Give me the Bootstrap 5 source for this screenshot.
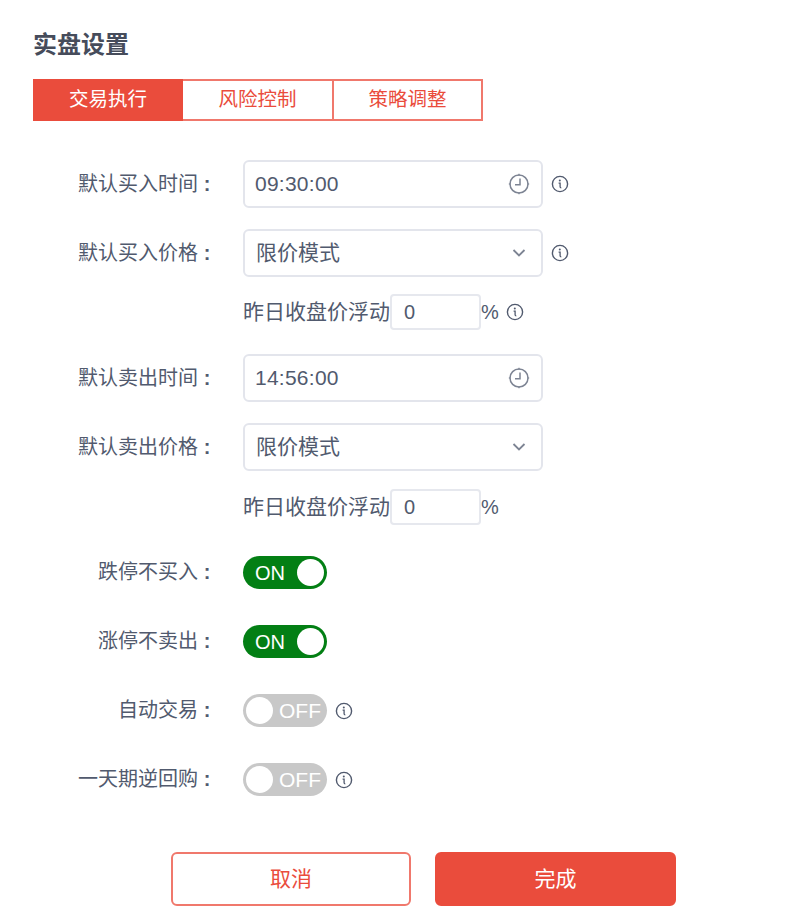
<!DOCTYPE html>
<html lang="zh-CN">
<head>
  <meta charset="UTF-8" />
  <title>实盘设置</title>
  <link rel="stylesheet" href="https://cdn.jsdelivr.net/npm/bootstrap@5.3.3/dist/css/bootstrap.min.css" />
  <style>
    body { font-family: "Liberation Sans", "Noto Sans CJK SC", sans-serif; font-size: 20px; color: #515a6e; background: #fff; }
    .page-wrap { width: 792px; height: 922px; padding: 30px 0 0 33px; overflow: hidden; }
    .page-title { font-size: 24px; line-height: 30px; font-weight: 700; color: #464c5b; margin: 0 0 19px; }
    .tab-bar { width: 450px; height: 42px; border: 2px solid #f0786c; margin-bottom: 39px; }
    .tab-item { flex: none; width: 149px; color: #ea4c3c; background: #fff; font-size: 19.500px; }
    .tab-item + .tab-item + .tab-item { border-left: 2px solid #f0786c; }
    .tab-item.active-tab { width: 150px; background: #ea4c3c; color: #fff; margin: -2px 0 -2px -2px; }
    .form-line { height: 48px; margin-bottom: 21px; }
    .form-line.with-sub { margin-bottom: 17px; }
    .form-line.with-sub-wide { margin-bottom: 18px; }
    .sub-line { height: 36px; margin: 0 0 24px 210px; color: #515a6e; font-size: 21px; }
    .sub-line.sub-last { margin-bottom: 31px; }
    .toggle-line { height: 33px; margin-bottom: 36px; }
    .form-name { width: 183px; text-align: right; color: #515a6e; margin-right: 27px; white-space: nowrap; padding-bottom: 1px; }
    .colon-mark { display: inline-block; width: 18px; text-align: center; font-weight: 700; }
    .fake-input { width: 300px; height: 48px; border: 2px solid #e3e5ec; border-radius: 6px; padding: 0 11px; font-size: 21px; color: #515a6e; }
    .fake-input.pick { padding-left: 10px; letter-spacing: .25px; }
    .fake-input .arrow-icon { margin-right: 4px; }
    .small-input { width: 91px; height: 36px; border: 2px solid #e6e8ee; border-radius: 4px; padding: 0 12px; font-size: 20px; }
    .pct-mark { font-size: 20px; }
    .info-icon { width: 18px; height: 18px; flex: none; margin-left: 8px; }
    .sub-line .info-icon { margin-left: 7px; }
    .switch-pill { width: 84px; height: 33px; border-radius: 17px; color: #fff; font-size: 20px; padding: 0 3px; }
    .switch-pill.on { background: #037f14; justify-content: space-between; padding-left: 12px; }
    .switch-pill.off { background: #c8c8c8; gap: 6px; font-size: 21px; }
    .switch-knob { width: 27px; height: 27px; border-radius: 50%; background: #fff; flex: none; }
    .foot-bar { margin: 56px 0 0 138px; gap: 24px; }
    .foot-btn { width: 240px; height: 54px; border-radius: 6px; border: 2px solid #f0786c; font-size: 21px; padding: 0; }
    .foot-btn.plain { background: #fff; color: #ea4c3c; }
    .foot-btn.solid { background: #ea4c3c; border-color: #ea4c3c; color: #fff; width: 241px; }
  </style>
</head>
<body>
  <svg width="0" height="0" class="position-absolute">
    <symbol id="ic-info" viewBox="0 0 18 18"><circle cx="9" cy="9" r="7.6" fill="none" stroke="#515a6e" stroke-width="1.4"/><path d="M7.6 8.200h1.500v3.600c0 .8.500 1 1.200 1" fill="none" stroke="#515a6e" stroke-width="1.300"/><circle cx="8.800" cy="5.600" r="1" fill="#515a6e"/></symbol>
    <symbol id="ic-clock" viewBox="0 0 22 22"><circle cx="11" cy="11" r="9" fill="none" stroke="#7d8493" stroke-width="1.500"/><path d="M12 5.500v6.300H7" fill="none" stroke="#7d8493" stroke-width="1.500"/><path d="M11 .8v2M11 19.200v2M.8 11h2M19.200 11h2" stroke="#7d8493" stroke-width="1.200"/></symbol>
    <symbol id="ic-down" viewBox="0 0 14 10"><path d="M1.500 2l5.500 5.500L12.500 2" fill="none" stroke="#7d8493" stroke-width="1.800"/></symbol>
  </svg>

  <div class="page-wrap">
    <h1 class="page-title">实盘设置</h1>

    <div class="tab-bar d-flex">
      <div class="tab-item active-tab d-flex align-items-center justify-content-center">交易执行</div>
      <div class="tab-item d-flex align-items-center justify-content-center">风险控制</div>
      <div class="tab-item d-flex align-items-center justify-content-center">策略调整</div>
    </div>

    <div class="form-line d-flex align-items-center">
      <div class="form-name">默认买入时间<span class="colon-mark">:</span></div>
      <div class="fake-input pick d-flex align-items-center justify-content-between"><span>09:30:00</span><svg width="22" height="22"><use href="#ic-clock"/></svg></div>
      <svg class="info-icon"><use href="#ic-info"/></svg>
    </div>
    <div class="form-line with-sub d-flex align-items-center">
      <div class="form-name">默认买入价格<span class="colon-mark">:</span></div>
      <div class="fake-input d-flex align-items-center justify-content-between"><span>限价模式</span><svg class="arrow-icon" width="14" height="10"><use href="#ic-down"/></svg></div>
      <svg class="info-icon"><use href="#ic-info"/></svg>
    </div>
    <div class="sub-line d-flex align-items-center">
      <span>昨日收盘价浮动</span>
      <div class="small-input d-flex align-items-center">0</div>
      <span class="pct-mark">%</span>
      <svg class="info-icon"><use href="#ic-info"/></svg>
    </div>

    <div class="form-line d-flex align-items-center">
      <div class="form-name">默认卖出时间<span class="colon-mark">:</span></div>
      <div class="fake-input pick d-flex align-items-center justify-content-between"><span>14:56:00</span><svg width="22" height="22"><use href="#ic-clock"/></svg></div>
    </div>
    <div class="form-line with-sub-wide d-flex align-items-center">
      <div class="form-name">默认卖出价格<span class="colon-mark">:</span></div>
      <div class="fake-input d-flex align-items-center justify-content-between"><span>限价模式</span><svg class="arrow-icon" width="14" height="10"><use href="#ic-down"/></svg></div>
    </div>
    <div class="sub-line sub-last d-flex align-items-center">
      <span>昨日收盘价浮动</span>
      <div class="small-input d-flex align-items-center">0</div>
      <span class="pct-mark">%</span>
    </div>

    <div class="toggle-line d-flex align-items-center">
      <div class="form-name">跌停不买入<span class="colon-mark">:</span></div>
      <div class="switch-pill on d-flex align-items-center"><span>ON</span><div class="switch-knob"></div></div>
    </div>
    <div class="toggle-line d-flex align-items-center">
      <div class="form-name">涨停不卖出<span class="colon-mark">:</span></div>
      <div class="switch-pill on d-flex align-items-center"><span>ON</span><div class="switch-knob"></div></div>
    </div>
    <div class="toggle-line d-flex align-items-center">
      <div class="form-name">自动交易<span class="colon-mark">:</span></div>
      <div class="switch-pill off d-flex align-items-center"><div class="switch-knob"></div><span>OFF</span></div>
      <svg class="info-icon"><use href="#ic-info"/></svg>
    </div>
    <div class="toggle-line d-flex align-items-center">
      <div class="form-name">一天期逆回购<span class="colon-mark">:</span></div>
      <div class="switch-pill off d-flex align-items-center"><div class="switch-knob"></div><span>OFF</span></div>
      <svg class="info-icon"><use href="#ic-info"/></svg>
    </div>

    <div class="foot-bar d-flex">
      <button type="button" class="btn foot-btn plain">取消</button>
      <button type="button" class="btn foot-btn solid">完成</button>
    </div>
  </div>
</body>
</html>
